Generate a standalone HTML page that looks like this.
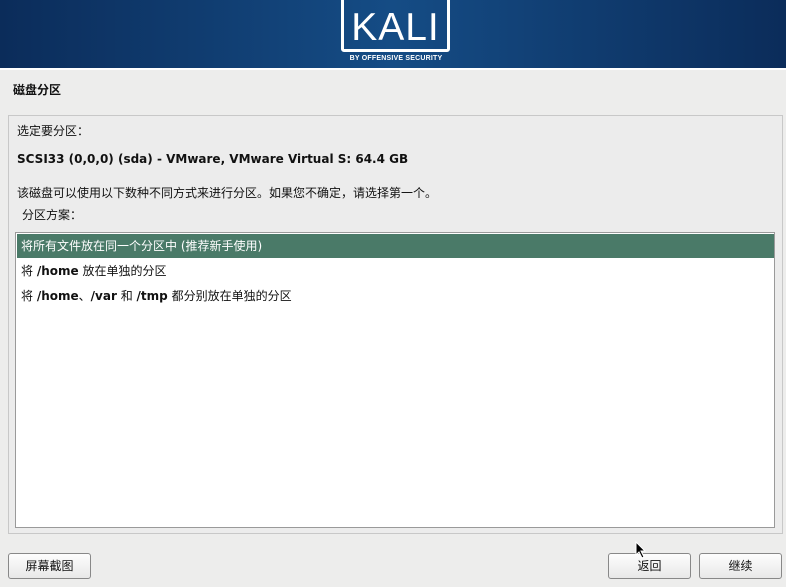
<!DOCTYPE html>
<html><head><meta charset="utf-8"><style>
*{margin:0;padding:0;box-sizing:border-box}
body{width:786px;height:587px;background:#ededec;font-family:"DejaVu Sans","Noto Sans CJK SC",sans-serif;font-size:12px;color:#111;position:relative;overflow:hidden}
.hdr{position:absolute;left:0;top:0;width:786px;height:68px;background:linear-gradient(90deg,#0b2c5a 0%,#154c85 50%,#0b2c5a 100%)}
.hdr:after{content:"";position:absolute;left:0;right:0;bottom:-2px;height:2px;background:#fff}
.logo{position:absolute;left:341px;top:-4px;width:109px;height:56px;border:3px solid #fff;border-radius:3px;color:#fff;font-family:"Liberation Sans",sans-serif;font-size:39px;text-align:center;line-height:58px;letter-spacing:1px}
.by{position:absolute;left:336px;top:55px;width:120px;text-align:center;color:#fff;font-family:"Liberation Sans",sans-serif;font-size:7px;font-weight:bold;letter-spacing:.2px}
.t{position:absolute;white-space:nowrap}
.panel{position:absolute;left:8px;top:115px;width:775px;height:419px;border:1px solid #c8c8c8;background:#ececec}
.list{position:absolute;left:15px;top:232px;width:760px;height:296px;border:1px solid #9a9a9a;background:#fff}
.row{position:absolute;left:1px;width:757px;height:24px;line-height:24px;padding-left:4px;font-size:12px}
.sel{background:#4a7a68;color:#fff}
.btn{position:absolute;top:553px;height:26px;border:1px solid #888;border-radius:3px;background:linear-gradient(#fdfdfd,#e8e8e8);text-align:center;line-height:24px;font-size:12px}
</style></head><body>
<div class="hdr"><div class="logo">KALI</div><div class="by">BY OFFENSIVE SECURITY</div></div>
<div class="t" style="left:13px;top:81px;font-weight:bold">磁盘分区</div>
<div class="panel"></div>
<div class="t" style="left:17px;top:122px">选定要分区：</div>
<div class="t" style="left:17px;top:152px;font-weight:bold;font-size:12px">SCSI33 (0,0,0) (sda) - VMware, VMware Virtual S: 64.4 GB</div>
<div class="t" style="left:17px;top:184px">该磁盘可以使用以下数种不同方式来进行分区。如果您不确定，请选择第一个。</div>
<div class="t" style="left:22px;top:206px">分区方案：</div>
<div class="list">
<div class="row sel" style="top:1px">将所有文件放在同一个分区中 (推荐新手使用)</div>
<div class="row" style="top:26px">将 <b>/home</b> 放在单独的分区</div>
<div class="row" style="top:51px">将 <b>/home</b>、<b>/var</b> 和 <b>/tmp</b> 都分别放在单独的分区</div>
</div>
<div class="btn" style="left:8px;width:83px">屏幕截图</div>
<div class="btn" style="left:608px;width:83px">返回</div>
<div class="btn" style="left:699px;width:83px">继续</div>
<svg style="position:absolute;left:635px;top:541px" width="12" height="18"><path d="M1 1 L1 14 L4 11 L7 17 L9 16 L6 10 L10 10 Z" fill="#000" stroke="#fff" stroke-width="1"/></svg>
</body></html>
